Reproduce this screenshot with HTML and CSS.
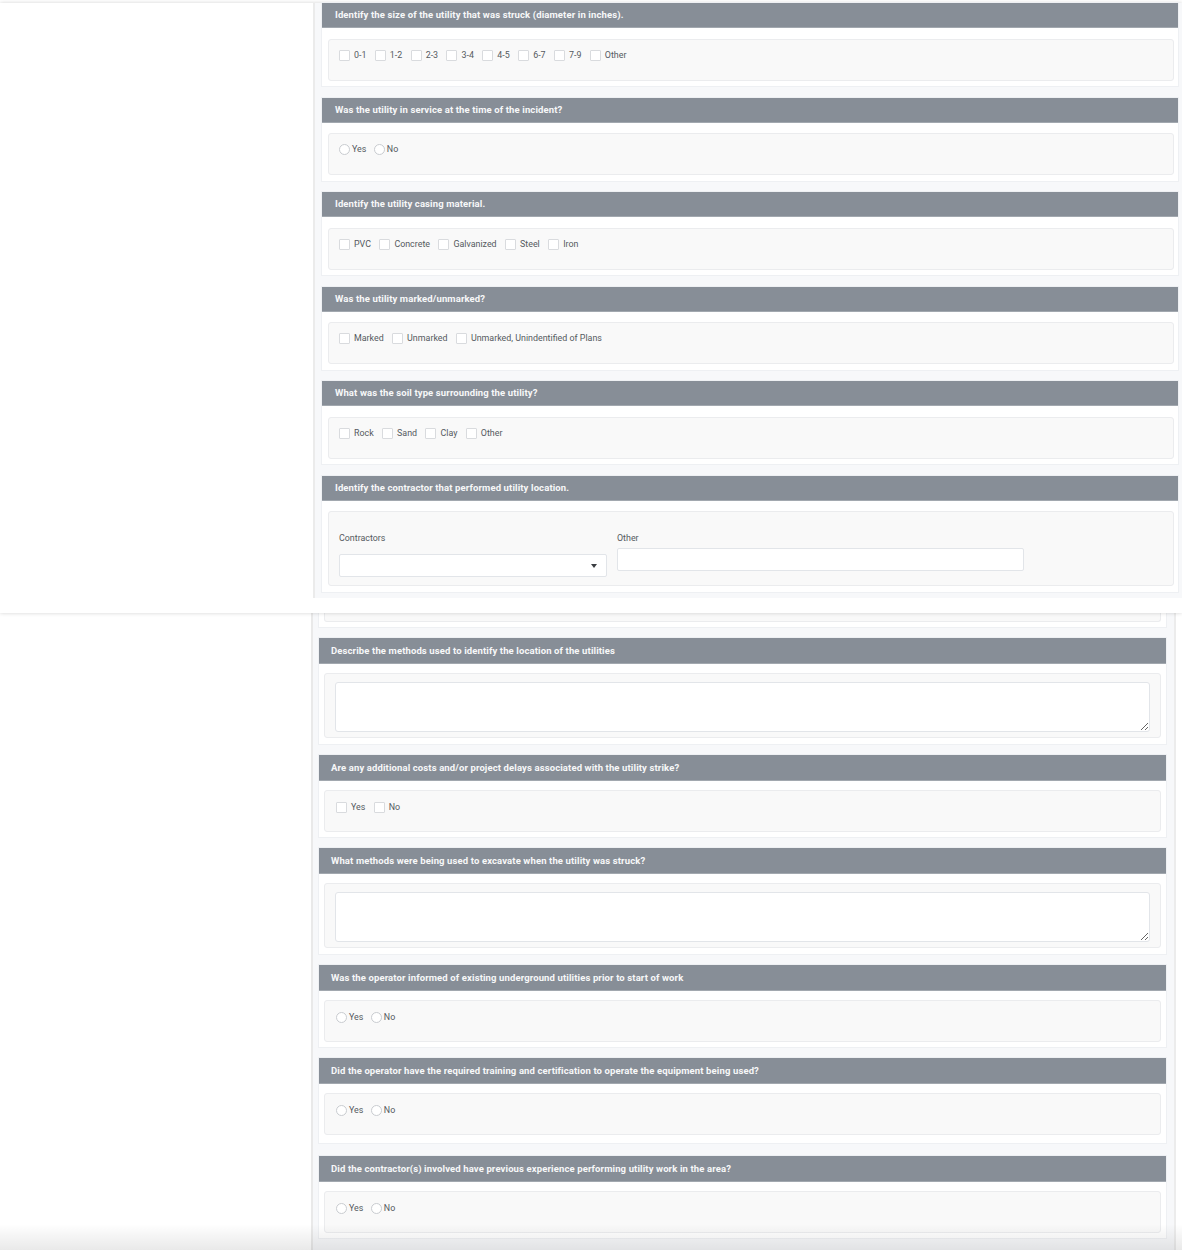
FILE: index.html
```
<!DOCTYPE html>
<html lang="en">
<head>
<meta charset="utf-8">
<title>Utility Strike Form</title>
<link rel="stylesheet" href="styles.css">
</head>
<body>
<div class="top-panel">
  <div class="column column--top">
    <section class="card">
      <h3 class="card-header">Identify the size of the utility that was struck (diameter in inches).</h3>
      <div class="card-body">
        <div class="field-box">
          <div class="options">
            <label class="opt"><input type="checkbox" class="chk"><span>0-1</span></label>
            <label class="opt"><input type="checkbox" class="chk"><span>1-2</span></label>
            <label class="opt"><input type="checkbox" class="chk"><span>2-3</span></label>
            <label class="opt"><input type="checkbox" class="chk"><span>3-4</span></label>
            <label class="opt"><input type="checkbox" class="chk"><span>4-5</span></label>
            <label class="opt"><input type="checkbox" class="chk"><span>6-7</span></label>
            <label class="opt"><input type="checkbox" class="chk"><span>7-9</span></label>
            <label class="opt"><input type="checkbox" class="chk"><span>Other</span></label>
          </div>
        </div>
      </div>
    </section>
    <section class="card">
      <h3 class="card-header">Was the utility in service at the time of the incident?</h3>
      <div class="card-body">
        <div class="field-box">
          <div class="options options--radio">
            <label class="opt"><input type="radio" name="svc" class="rad"><span>Yes</span></label>
            <label class="opt"><input type="radio" name="svc" class="rad"><span>No</span></label>
          </div>
        </div>
      </div>
    </section>
    <section class="card">
      <h3 class="card-header">Identify the utility casing material.</h3>
      <div class="card-body">
        <div class="field-box">
          <div class="options">
            <label class="opt"><input type="checkbox" class="chk"><span>PVC</span></label>
            <label class="opt"><input type="checkbox" class="chk"><span>Concrete</span></label>
            <label class="opt"><input type="checkbox" class="chk"><span>Galvanized</span></label>
            <label class="opt"><input type="checkbox" class="chk"><span>Steel</span></label>
            <label class="opt"><input type="checkbox" class="chk"><span>Iron</span></label>
          </div>
        </div>
      </div>
    </section>
    <section class="card">
      <h3 class="card-header">Was the utility marked/unmarked?</h3>
      <div class="card-body">
        <div class="field-box">
          <div class="options">
            <label class="opt"><input type="checkbox" class="chk"><span>Marked</span></label>
            <label class="opt"><input type="checkbox" class="chk"><span>Unmarked</span></label>
            <label class="opt"><input type="checkbox" class="chk"><span>Unmarked, Unindentified of Plans</span></label>
          </div>
        </div>
      </div>
    </section>
    <section class="card">
      <h3 class="card-header">What was the soil type surrounding the utility?</h3>
      <div class="card-body">
        <div class="field-box">
          <div class="options">
            <label class="opt"><input type="checkbox" class="chk"><span>Rock</span></label>
            <label class="opt"><input type="checkbox" class="chk"><span>Sand</span></label>
            <label class="opt"><input type="checkbox" class="chk"><span>Clay</span></label>
            <label class="opt"><input type="checkbox" class="chk"><span>Other</span></label>
          </div>
        </div>
      </div>
    </section>
    <section class="card card--last">
      <h3 class="card-header">Identify the contractor that performed utility location.</h3>
      <div class="card-body card-body--contractors">
        <div class="field-box field-box--contractors">
          <div class="contractor-grid">
            <div class="contractor-col contractor-col--select">
              <div class="field-label">Contractors</div>
              <div class="select-box"></div>
            </div>
            <div class="contractor-col contractor-col--other">
              <div class="field-label">Other</div>
              <input type="text" class="text-input">
            </div>
          </div>
        </div>
      </div>
    </section>
  </div>
</div>

<div class="lower">
  <div class="column column--lower">
    <div class="card card--stub">
      <div class="card-body card-body--stub">
        <div class="field-box field-box--stub"></div>
      </div>
    </div>
    <section class="card">
      <h3 class="card-header">Describe the methods used to identify the location of the utilities</h3>
      <div class="card-body">
        <div class="field-box field-box--text">
          <textarea class="textarea"></textarea>
        </div>
      </div>
    </section>
    <section class="card">
      <h3 class="card-header">Are any additional costs and/or project delays associated with the utility strike?</h3>
      <div class="card-body card-body--tight">
        <div class="field-box">
          <div class="options">
            <label class="opt"><input type="checkbox" class="chk"><span>Yes</span></label>
            <label class="opt"><input type="checkbox" class="chk"><span>No</span></label>
          </div>
        </div>
      </div>
    </section>
    <section class="card">
      <h3 class="card-header">What methods were being used to excavate when the utility was struck?</h3>
      <div class="card-body">
        <div class="field-box field-box--text">
          <textarea class="textarea"></textarea>
        </div>
      </div>
    </section>
    <section class="card">
      <h3 class="card-header">Was the operator informed of existing underground utilities prior to start of work</h3>
      <div class="card-body card-body--tight">
        <div class="field-box">
          <div class="options options--radio">
            <label class="opt"><input type="radio" name="inf" class="rad"><span>Yes</span></label>
            <label class="opt"><input type="radio" name="inf" class="rad"><span>No</span></label>
          </div>
        </div>
      </div>
    </section>
    <section class="card card--wide-gap">
      <h3 class="card-header">Did the operator have the required training and certification to operate the equipment being used?</h3>
      <div class="card-body card-body--loose">
        <div class="field-box">
          <div class="options options--radio">
            <label class="opt"><input type="radio" name="trn" class="rad"><span>Yes</span></label>
            <label class="opt"><input type="radio" name="trn" class="rad"><span>No</span></label>
          </div>
        </div>
      </div>
    </section>
    <section class="card">
      <h3 class="card-header">Did the contractor(s) involved have previous experience performing utility work in the area?</h3>
      <div class="card-body card-body--tight">
        <div class="field-box">
          <div class="options options--radio">
            <label class="opt"><input type="radio" name="exp" class="rad"><span>Yes</span></label>
            <label class="opt"><input type="radio" name="exp" class="rad"><span>No</span></label>
          </div>
        </div>
      </div>
    </section>
  </div>
</div>
</body>
</html>
```

FILE: styles.css
```
* {
  box-sizing: border-box;
}

html,
body {
  margin: 0;
  padding: 0;
  background: #ffffff;
}

body {
  width: 1182px;
  height: 1250px;
  padding-top: 3px;
  overflow: hidden;
  font-family: Roboto, "Liberation Sans", Arial, sans-serif;
}

/* ---------- top overlay panel ---------- */
.top-panel {
  position: relative;
  z-index: 2;
  height: 610px;
  padding-left: 313px;
  background: #ffffff;
  box-shadow: 0 0 4px rgba(0, 0, 0, 0.18);
}

.column {
  background: #f7f8fa;
}

.column--top {
  height: 595px;
  border-left: 2px solid #ebebeb;
  padding: 0 4px 0 7px;
}

/* ---------- cards ---------- */
.card {
  background: #ffffff;
  box-shadow: 0 0 0 1px #eef0f3;
  margin-bottom: 11.5px;
}

.card--last {
  margin-bottom: 0;
}

.card-header {
  margin: 0;
  height: 25px;
  line-height: 24px;
  padding-left: 13px;
  background: #878e97;
  box-shadow: inset 0 -1px 0 #a2a8af;
  color: #f7f8f9;
  font-size: 9.5px;
  font-weight: 700;
  letter-spacing: 0.12px;
  white-space: nowrap;
}

.card-body {
  padding: 10.5px 4px 5.5px 6px;
}

.card-body--contractors {
  padding-bottom: 6px;
}

.field-box {
  height: 42px;
  padding: 10px 10px 0;
  background: #f9f9f9;
  border: 1px solid #ebecee;
  border-radius: 3px;
}

/* ---------- options ---------- */
.options {
  display: flex;
  align-items: center;
  height: 11px;
}

.opt {
  display: flex;
  align-items: center;
  margin-right: 8.4px;
  font-size: 8.9px;
  line-height: 11px;
  color: #555a60;
  white-space: nowrap;
}

.chk {
  appearance: none;
  -webkit-appearance: none;
  flex: none;
  width: 11px;
  height: 11px;
  margin: 0 4px 0 0;
  background: #ffffff;
  border: 1px solid #d9dbde;
  border-radius: 1px;
}

.options--radio .opt {
  margin-right: 7.5px;
}

.rad {
  appearance: none;
  -webkit-appearance: none;
  flex: none;
  width: 11px;
  height: 11px;
  margin: 0 2px 0 0;
  background: #ffffff;
  border: 1px solid #c9ccd0;
  border-radius: 50%;
}

/* ---------- contractors ---------- */
.field-box--contractors {
  height: 75px;
  padding: 21px 10px 0;
}

.contractor-grid {
  display: flex;
  gap: 10px;
}

.contractor-col--select {
  width: 268px;
}

.contractor-col--other {
  width: 407px;
}

.field-label {
  height: 10px;
  line-height: 10px;
  font-size: 8.9px;
  color: #555a60;
}

.select-box {
  position: relative;
  height: 23px;
  margin-top: 11px;
  background: #ffffff;
  border: 1px solid #e2e5e9;
  border-radius: 2px;
}

.select-box::after {
  content: "";
  position: absolute;
  right: 9px;
  top: 9px;
  border-left: 3px solid transparent;
  border-right: 3px solid transparent;
  border-top: 4px solid #3a3d41;
}

.text-input {
  display: block;
  width: 100%;
  height: 23px;
  margin: 5px 0 0;
  padding: 0;
  background: #ffffff;
  border: 1px solid #e2e5e9;
  border-radius: 2px;
  outline: none;
}

/* ---------- lower page ---------- */
.lower {
  position: relative;
  height: 637px;
  overflow: hidden;
}

.lower::after {
  content: "";
  position: absolute;
  left: 0;
  right: 0;
  bottom: 0;
  height: 26px;
  background: linear-gradient(to bottom, rgba(0, 0, 0, 0), rgba(0, 0, 0, 0.085));
  pointer-events: none;
}

.column--lower {
  margin-left: 311px;
  width: 865px;
  height: 100%;
  border-left: 2px solid #e9e9e9;
  border-right: 2px solid #ececec;
  padding: 0 8px 0 6px;
}

.column--lower .card {
  margin-bottom: 11px;
}

.column--lower .card-header {
  height: 26px;
  line-height: 25px;
  padding-left: 12px;
}

.column--lower .card-body {
  padding: 9px 5px 6px 5px;
}

.column--lower .card-body--tight {
  padding-bottom: 5px;
}

.column--lower .card-body--loose {
  padding-bottom: 8px;
}

.column--lower .card--wide-gap {
  margin-bottom: 13px;
}

.column--lower .field-box {
  padding: 10.5px 11px 0;
}

.card--stub .card-body--stub {
  padding: 0 5px 5px 5px;
}

.column--lower .field-box--stub {
  height: 9px;
  padding: 0;
  border-top: none;
  border-radius: 0 0 3px 3px;
}

.column--lower .field-box--text {
  height: 65px;
  padding: 8px 10px 0;
}

.textarea {
  display: block;
  width: 100%;
  height: 50px;
  margin: 0;
  padding: 4px;
  background: #ffffff;
  border: 1px solid #e2e5e9;
  border-radius: 3px;
  outline: none;
  resize: vertical;
  font-family: inherit;
}
```
